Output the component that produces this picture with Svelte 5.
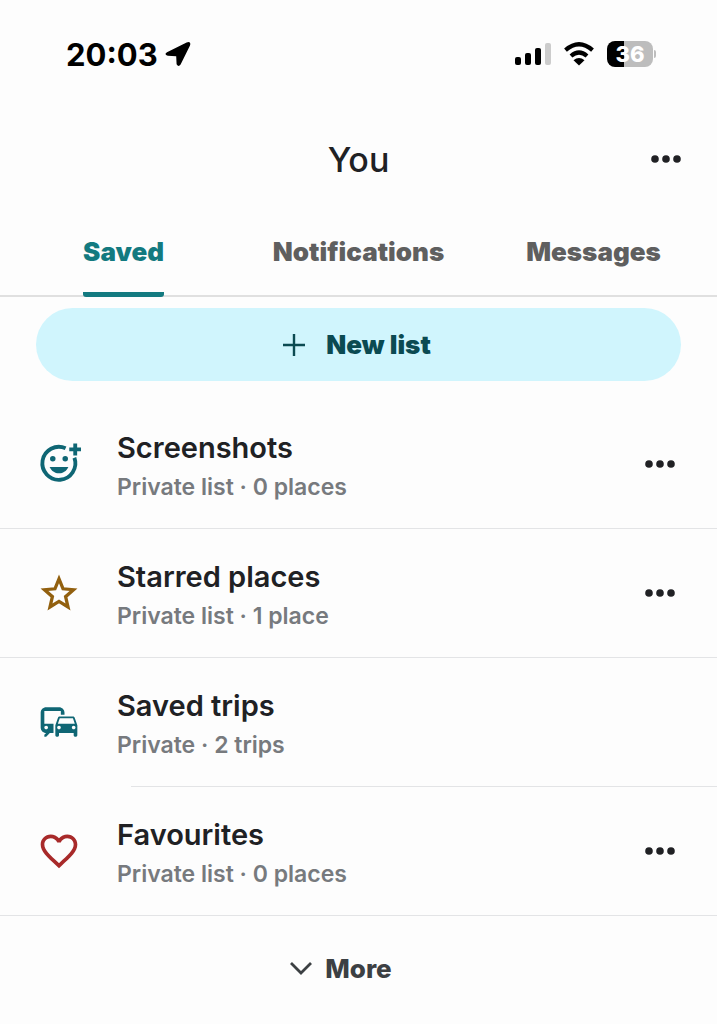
<script>
  const tabs = ["Saved", "Notifications", "Messages"];

  const lists = [
    { icon: "reaction", title: "Screenshots", detail: "Private list · 0 places", menu: true },
    { icon: "star", title: "Starred places", detail: "Private list · 1 place", menu: true },
    { icon: "commute", title: "Saved trips", detail: "Private · 2 trips", menu: false },
    { icon: "heart", title: "Favourites", detail: "Private list · 0 places", menu: true },
  ];

  let active = $state("Saved");
</script>

{#snippet dots()}
  <svg width="30" height="8" viewBox="0 0 30 8" aria-hidden="true">
    <circle cx="4" cy="4" r="3.8" />
    <circle cx="15" cy="4" r="3.8" />
    <circle cx="26" cy="4" r="3.8" />
  </svg>
{/snippet}

<div class="screen">
  <div class="status">
    <div class="clock">
      <span>20:03</span>
      <svg width="26" height="26" viewBox="0 0 26 26" aria-hidden="true">
        <path
          d="M2 11.2 L21.6 1.4 Q26.4 -.2 25 4.6 L15.6 23.6 Q13.4 26.6 11.6 23.2 L11.2 15.2 L2.8 14.8 Q-1.400 13.400 2 11.200Z"
        />
      </svg>
    </div>
    <div class="signals">
      <svg width="36" height="24" viewBox="0 0 36 24" aria-hidden="true">
        <rect x="0" y="15" width="6" height="8" rx="2" />
        <rect x="10" y="11" width="6" height="12" rx="2" />
        <rect x="20" y="6" width="6" height="17" rx="2" />
        <rect x="30" y="1" width="6" height="22" rx="2" fill="#ccc" />
      </svg>
      <svg width="32" height="24" viewBox="0 0 32 24" aria-hidden="true">
        <path
          d="M2.5 8.2 Q16 -3.6 29.5 8.2 M8 14 Q16 7 24 14"
          fill="none"
          stroke="#000"
          stroke-width="4.2"
        />
        <path d="M10.5 18.2 Q16 14 21.5 18.2 L16 23.5Z" />
      </svg>
      <div class="battery"><span>36</span></div>
    </div>
  </div>

  <header>
    <h1>You</h1>
    <button class="dots" aria-label="More options">{@render dots()}</button>
  </header>

  <nav>
    {#each tabs as tab}
      <button class="tab" class:active={active === tab} onclick={() => (active = tab)}>
        <span>{tab}</span>
      </button>
    {/each}
  </nav>

  <main>
    <button class="new-list">
      <svg width="24" height="24" viewBox="0 0 24 24" aria-hidden="true">
        <path d="M12 1v22M1 12h22" fill="none" stroke="#0b4a52" stroke-width="2.4" />
      </svg>
      New list
    </button>

    <ul>
      {#each lists as list}
        <li class={list.icon}>
          <svg class="icon" width="44" height="44" viewBox="0 0 24 24" aria-hidden="true">
            {#if list.icon === "reaction"}
              <path
                d="M15.6 3.4A9 9 0 1 0 20.4 8.6"
                fill="none"
                stroke="currentColor"
                stroke-width="2.1"
              />
              <path d="M19.8 .8h2.1v2.2H24v2.1h-2.1v2.2h-2.1V5.100h-2.200V3h2.200z" />
              <circle cx="8.6" cy="9.1" r="1.5" />
              <circle cx="15.4" cy="9.1" r="1.5" />
              <path d="M6.9 13.6h10.2c-.8 2-2.8 3.5-5.1 3.5s-4.3-1.5-5.1-3.5z" />
            {:else if list.icon === "star"}
              <path
                d="M12 4.3l2.2 5.4 5.7.5-4.3 3.8 1.3 5.600-4.900-3-4.900 3 1.300-5.600-4.300-3.800 5.700-.5z"
                fill="none"
                stroke="currentColor"
                stroke-width="1.8"
              />
            {:else if list.icon === "commute"}
              <path
                d="M12 4H5C3.34 4 2 5.34 2 7v8c0 1.66 1.34 3 3 3l-1 1v1h1l2-2.03L9 18v-5H4V5.98L13 6v2h2V7c0-1.66-1.34-3-3-3zM5 14c.55 0 1 .45 1 1s-.45 1-1 1-1-.45-1-1 .45-1 1-1zm15.57-4.34c-.14-.4-.52-.66-.97-.66h-7.19c-.46 0-.83.26-.98.66L10 13.77l.01 5.51c0 .38.31.72.69.72h.62c.38 0 .68-.38.68-.76V18h8v1.24c0 .38.31.76.69.76h.61c.38 0 .69-.34.69-.72l.01-1.37v-4.14l-1.43-4.11zm-8.16.34h7.19l1.03 3h-9.25l1.03-3zM12 16c-.55 0-1-.45-1-1s.45-1 1-1 1 .45 1 1-.45 1-1 1zm8 0c-.55 0-1-.45-1-1s.45-1 1-1 1 .45 1 1-.45 1-1 1z"
              />
            {:else}
              <path
                d="M16.5 3c-1.74 0-3.41.81-4.5 2.09C10.91 3.81 9.24 3 7.5 3 4.42 3 2 5.42 2 8.5c0 3.78 3.4 6.86 8.55 11.54L12 21.35l1.45-1.32C18.6 15.36 22 12.28 22 8.5 22 5.42 19.58 3 16.5 3zm-4.4 15.55l-.1.1-.1-.1C7.14 14.24 4 11.39 4 8.5 4 6.5 5.5 5 7.5 5c1.54 0 3.04.99 3.57 2.36h1.87C13.46 5.99 14.96 5 16.5 5c2 0 3.5 1.5 3.5 3.5 0 2.89-3.14 5.74-7.9 10.05z"
              />
            {/if}
          </svg>
          <div class="text">
            <h2>{list.title}</h2>
            <p>{list.detail}</p>
          </div>
          {#if list.menu}
            <button class="dots" aria-label="Options for {list.title}">{@render dots()}</button>
          {/if}
        </li>
      {/each}
    </ul>

    <button class="more">
      <svg width="24" height="14" viewBox="0 0 24 14" aria-hidden="true">
        <path d="M2 2l10 10L22 2" fill="none" stroke="#3c4043" stroke-width="2.8" />
      </svg>
      More
    </button>
  </main>
</div>

<style>
  :global(body) {
    background: #fdfdfd;
  }

  .screen {
    font-family: Inter, "Liberation Sans", sans-serif;
    color: #202124;
  }

  button {
    font: inherit;
    color: inherit;
    background: none;
    border: 0;
    padding: 0;
    cursor: pointer;
  }

  svg {
    display: block;
    flex: none;
    fill: currentColor;
  }

  h1,
  h2,
  p,
  ul {
    margin: 0;
    padding: 0;
  }

  .status {
    display: flex;
    justify-content: space-between;
    align-items: center;
    height: 108px;
    padding: 0 64px 0 66px;
    color: #000;
  }

  .clock {
    display: flex;
    align-items: center;
    gap: 7px;
    font-size: 31px;
    font-weight: 700;
  }

  .signals {
    display: flex;
    align-items: center;
    gap: 12px;
  }

  .battery {
    position: relative;
    width: 46px;
    height: 26px;
    border-radius: 8px;
    background: linear-gradient(to right, #000 36%, #bdbdbd 36%);
    color: #fff;
    font-size: 22px;
    font-weight: 800;
    line-height: 26px;
    text-align: center;
  }

  .battery::after {
    content: "";
    position: absolute;
    left: 47px;
    top: 9px;
    width: 2px;
    height: 8px;
    border-radius: 0 2px 2px 0;
    background: #bdbdbd;
  }

  header {
    display: grid;
    grid-template-columns: 1fr auto 1fr;
    align-items: center;
    height: 102px;
    padding: 0 36px;
  }

  h1 {
    grid-column: 2;
    font-size: 34px;
    font-weight: 500;
  }

  header .dots {
    justify-self: end;
  }

  nav {
    display: grid;
    grid-template-columns: repeat(3, 1fr);
    padding: 0 6px;
    border-bottom: 2px solid #e0e0e0;
  }

  .tab {
    display: flex;
    justify-content: center;
    height: 85px;
    color: #5f5f5f;
    font-size: 26px;
    font-weight: 900;
    line-height: 84px;
  }

  .tab span {
    height: 82px;
  }

  .tab.active {
    color: #137a80;
  }

  .tab.active span {
    border-bottom: 5px solid #137a80;
    border-radius: 3px;
  }

  main {
    display: flex;
    flex-direction: column;
    padding-top: 11px;
  }

  .new-list {
    display: flex;
    align-items: center;
    justify-content: center;
    gap: 20px;
    height: 73px;
    margin: 0 36px 19px;
    padding-right: 4px;
    border-radius: 37px;
    background: #d0f5fd;
    color: #0b4a52;
    font-size: 26px;
    font-weight: 900;
  }

  ul {
    list-style: none;
  }

  li {
    display: flex;
    align-items: center;
    height: 128px;
    padding: 0 42px 0 37px;
    border-bottom: 1px solid #e3e4e6;
    color: #0f6674;
  }

  /* the trips row only draws its divider under the text */
  .commute {
    border-image: linear-gradient(to right, transparent 132px, #e3e4e6 132px) 1;
  }

  .star {
    color: #92600f;
  }

  .heart {
    color: #a82a2a;
  }

  .text {
    flex: 1;
    padding: 5px 0 0 36px;
  }

  h2 {
    color: #202124;
    font-size: 29px;
    font-weight: 600;
    line-height: 40px;
  }

  p {
    color: #777a7e;
    font-size: 23px;
    font-weight: 600;
    line-height: 38px;
  }

  .dots {
    color: #202124;
  }

  .more {
    display: flex;
    align-items: center;
    justify-content: center;
    gap: 12px;
    height: 104px;
    padding-right: 36px;
    color: #3c4043;
    font-size: 26px;
    font-weight: 800;
  }
</style>
